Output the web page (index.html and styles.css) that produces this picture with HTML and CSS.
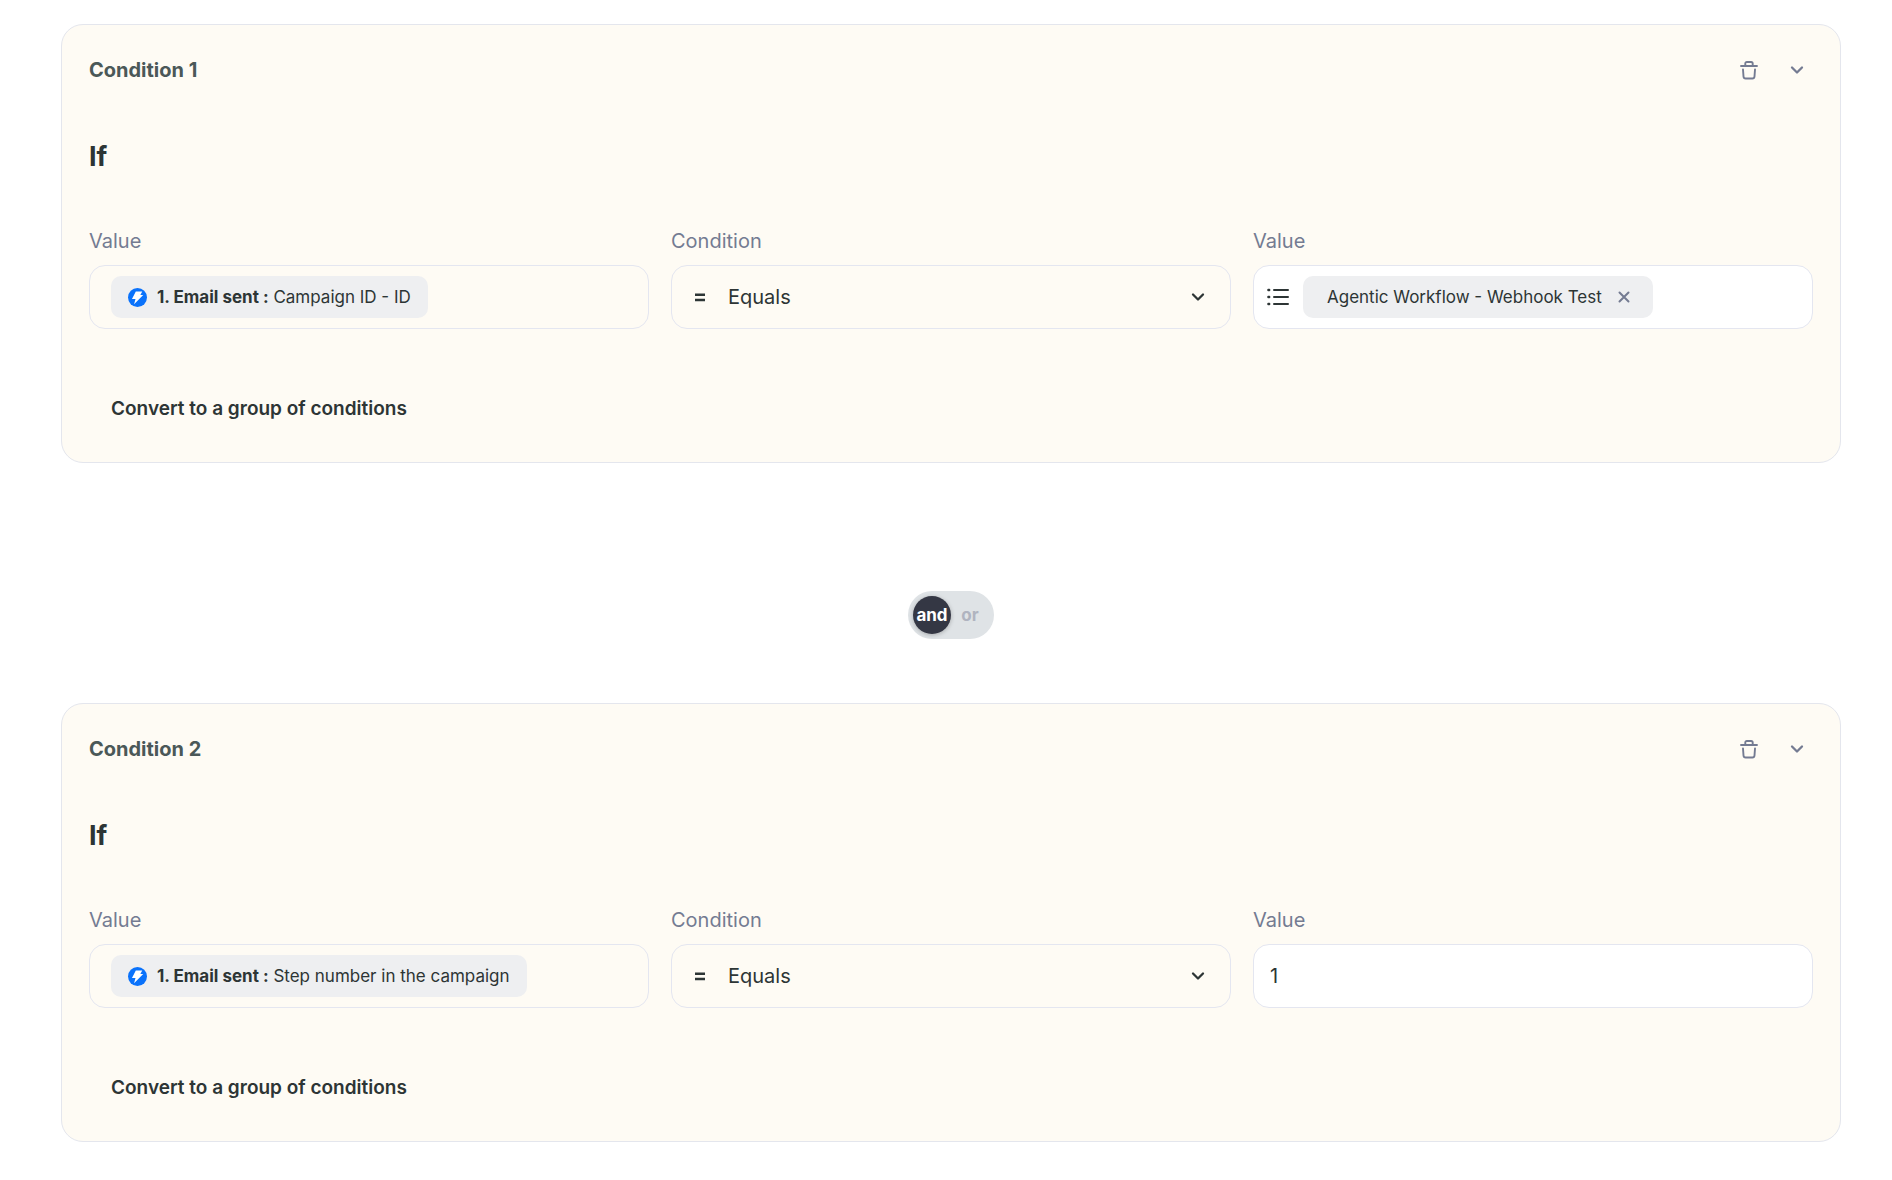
FILE: index.html
```html
<!DOCTYPE html>
<html lang="en">
<head>
<meta charset="utf-8">
<meta name="viewport" content="width=device-width, initial-scale=1">
<title>Conditions</title>
<link rel="stylesheet" href="styles.css">
</head>
<body>
<svg class="sprite" aria-hidden="true">
  <symbol id="trash" viewBox="0 0 20 20"><path d="M2 6h16M6.300 5.500V3.600c0-1 .6-1.600 1.600-1.600h4.200c1 0 1.600.6 1.600 1.600v1.900M4 9.500l.5 7c.1 1.300.8 2 2.100 2h6.800c1.300 0 2-.7 2.100-2l.5-7" fill="none" stroke="currentColor" stroke-width="1.900" stroke-linecap="round" stroke-linejoin="round"/></symbol>
  <symbol id="chevron" viewBox="0 0 14 14"><path d="M2 4.500l5 5 5-5" fill="none" stroke="currentColor" stroke-width="2.300" stroke-linecap="round" stroke-linejoin="round"/></symbol>
  <symbol id="equals" viewBox="0 0 10 10"><path d="M0 2.800h10M0 8h10" fill="none" stroke="currentColor" stroke-width="2.600"/></symbol>
  <symbol id="list" viewBox="0 0 22 18"><path d="M7 2h14M7 9h14M7 16h14" stroke="currentColor" stroke-width="2" stroke-linecap="round"/><path d="M1.400 2h.8M1.400 9h.8M1.400 16h.8" stroke="currentColor" stroke-width="2.400" stroke-linecap="round"/></symbol>
  <symbol id="cross" viewBox="0 0 12 12"><path d="M1.500 1.500l9 9M10.500 1.500l-9 9" stroke="currentColor" stroke-width="2" stroke-linecap="round"/></symbol>
  <symbol id="bolt" viewBox="0 0 20 20"><circle cx="10" cy="10" r="10" fill="#0a72fb"/><path d="M8.200 3.600h6.800l-2 3.700h3L6.400 17l1.500-5.300H4.200z" fill="#fff"/></symbol>
</svg>
<main class="conditions">
  <section class="card">
    <header class="card-header">
      <h2 class="card-title">Condition 1</h2>
      <div class="card-actions">
        <button class="icon-button" type="button" aria-label="Delete condition 1"><svg class="icon-trash"><use href="#trash"/></svg></button>
        <button class="icon-button" type="button" aria-label="Collapse condition 1"><svg class="icon-chevron"><use href="#chevron"/></svg></button>
      </div>
    </header>
    <h3 class="card-if">If</h3>
    <div class="fields">
      <div class="field">
        <span class="label" id="source-1">Value</span>
        <div class="control control-source" role="group" aria-labelledby="source-1">
          <span class="chip"><svg class="icon-bolt"><use href="#bolt"/></svg><span><strong>1. Email sent :</strong> Campaign ID - ID</span></span>
        </div>
      </div>
      <div class="field">
        <label class="label" for="operator-1">Condition</label>
        <div class="control control-select">
          <svg class="icon-equals"><use href="#equals"/></svg>
          <select class="select" id="operator-1"><option>Equals</option></select>
          <svg class="icon-chevron"><use href="#chevron"/></svg>
        </div>
      </div>
      <div class="field">
        <span class="label" id="target-1">Value</span>
        <div class="control control-list" role="group" aria-labelledby="target-1">
          <svg class="icon-list"><use href="#list"/></svg>
          <span class="chip chip-removable">Agentic Workflow - Webhook Test<button class="chip-remove" type="button" aria-label="Remove"><svg class="icon-cross"><use href="#cross"/></svg></button></span>
        </div>
      </div>
    </div>
    <button class="convert" type="button">Convert to a group of conditions</button>
  </section>

  <fieldset class="toggle" aria-label="Combine conditions with">
    <label class="toggle-option"><input class="toggle-input" type="radio" name="join" value="and" checked><span class="toggle-text">and</span></label>
    <label class="toggle-option"><input class="toggle-input" type="radio" name="join" value="or"><span class="toggle-text">or</span></label>
  </fieldset>

  <section class="card">
    <header class="card-header">
      <h2 class="card-title">Condition 2</h2>
      <div class="card-actions">
        <button class="icon-button" type="button" aria-label="Delete condition 2"><svg class="icon-trash"><use href="#trash"/></svg></button>
        <button class="icon-button" type="button" aria-label="Collapse condition 2"><svg class="icon-chevron"><use href="#chevron"/></svg></button>
      </div>
    </header>
    <h3 class="card-if">If</h3>
    <div class="fields">
      <div class="field">
        <span class="label" id="source-2">Value</span>
        <div class="control control-source" role="group" aria-labelledby="source-2">
          <span class="chip"><svg class="icon-bolt"><use href="#bolt"/></svg><span><strong>1. Email sent :</strong> Step number in the campaign</span></span>
        </div>
      </div>
      <div class="field">
        <label class="label" for="operator-2">Condition</label>
        <div class="control control-select">
          <svg class="icon-equals"><use href="#equals"/></svg>
          <select class="select" id="operator-2"><option>Equals</option></select>
          <svg class="icon-chevron"><use href="#chevron"/></svg>
        </div>
      </div>
      <div class="field">
        <label class="label" for="target-2">Value</label>
        <input class="control control-input" id="target-2" type="text" value="1">
      </div>
    </div>
    <button class="convert" type="button">Convert to a group of conditions</button>
  </section>
</main>
</body>
</html>
```
FILE: styles.css
```css
* { box-sizing: border-box; }

body {
  margin: 0;
  background: #fff;
  color: #2d3535;
  font-family: Inter, "Liberation Sans", sans-serif;
  font-size: 17px;
}

button, input, select { font: inherit; color: inherit; }
button { padding: 0; border: 0; background: none; cursor: pointer; }
svg { display: block; flex: none; }
strong { font-weight: 700; }

.sprite { display: none; }

.conditions {
  display: flex;
  flex-direction: column;
  padding: 24px 51px 37px 61px;
}

.card {
  padding: 27px 27px 36px;
  border: 1px solid #e4e6ed;
  border-radius: 22px;
  background: #fefbf4;
}

.card-header {
  display: flex;
  align-items: center;
  justify-content: space-between;
  height: 36px;
}

.card-title {
  margin: 0;
  color: #4b5858;
  font-size: 20px;
  font-weight: 700;
}

.card-actions { display: flex; gap: 16px; }

.icon-button {
  display: grid;
  place-items: center;
  width: 32px;
  height: 32px;
  color: #747b92;
}

.card-if {
  margin: 52px 0 53px;
  font-size: 27px;
  font-weight: 700;
  line-height: 34px;
}

.fields {
  display: grid;
  grid-template-columns: repeat(3, minmax(0, 1fr));
  gap: 22px;
}

.field { display: flex; flex-direction: column; gap: 10px; }

.label {
  color: #747b92;
  font-size: 20px;
  line-height: 28px;
}

.control {
  display: flex;
  align-items: center;
  width: 100%;
  height: 64px;
  border: 1px solid #e4e6f0;
  border-radius: 16px;
}

.control-source { padding: 0 21px; }

.control-select { padding: 0 25px 0 23px; font-size: 20px; }

.select {
  flex: 1;
  min-width: 0;
  height: 100%;
  padding: 0 0 0 23px;
  border: 0;
  background: none;
  appearance: none;
}

.control-list { gap: 14px; padding: 0 13px; background: #fff; }

.control-input { padding: 0 16px; background: #fff; font-size: 20px; }

.chip {
  display: flex;
  align-items: center;
  gap: 10px;
  height: 42px;
  padding: 0 17px;
  border-radius: 10px;
  background: #eeeff1;
  white-space: nowrap;
}

.chip-removable { gap: 16px; padding: 0 23px 0 24px; }

.chip-remove { color: #747b92; }

.icon-trash { width: 20px; height: 20px; }
.icon-chevron { width: 14px; height: 14px; }
.icon-equals { width: 10px; height: 10px; }
.icon-list { width: 22px; height: 18px; }
.icon-cross { width: 12px; height: 12px; }
.icon-bolt { width: 19px; height: 19px; }

.convert {
  display: block;
  height: 36px;
  margin-top: 61px;
  padding: 0 22px;
  font-size: 19px;
  font-weight: 600;
}

.toggle {
  display: flex;
  align-self: center;
  min-width: 0;
  margin: 128px 0 64px;
  padding: 5px;
  border: 0;
  border-radius: 24px;
  background: #dfe3e6;
}

.toggle-option {
  display: grid;
  place-items: center;
  width: 38px;
  height: 38px;
  border-radius: 50%;
  color: #b0b4c0;
  font-weight: 700;
  cursor: pointer;
}

.toggle-option:has(:checked) {
  background: #343744;
  color: #fff;
  box-shadow: 0 1px 4px rgb(0 0 0 / 25%);
}

.toggle-input, .toggle-text { grid-area: 1 / 1; }
.toggle-input { margin: 0; opacity: 0; }
```
